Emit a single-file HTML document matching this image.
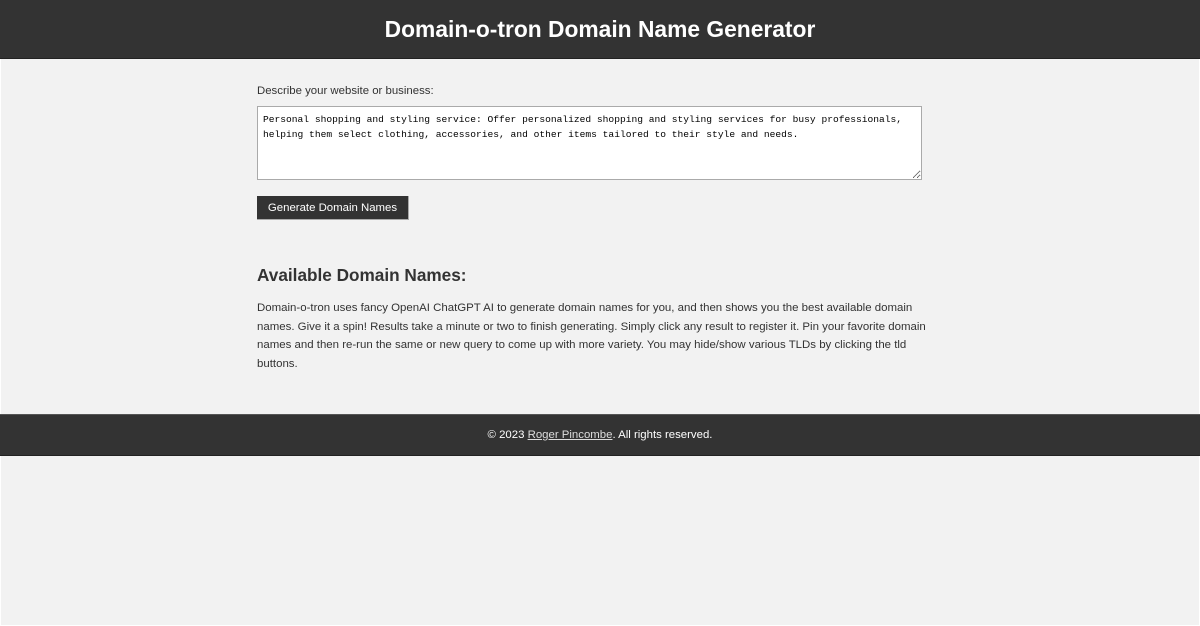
<!DOCTYPE html>
<html><head><style>
html,body{margin:0;padding:0;background:#fff;}
body{font-family:"Liberation Sans",Arial,sans-serif;width:1200px;height:626px;position:relative;overflow:hidden;}
.wrap{position:absolute;left:1px;top:0;width:1198px;height:625px;background:#f2f2f2;}
header{position:absolute;left:0;top:0;width:1200px;height:58px;background:#333;border-bottom:1px solid #222;color:#fff;text-align:center;font-size:22.8px;font-weight:bold;line-height:58px;}
.lbl{position:absolute;left:257px;top:85px;font-size:11.4px;color:#333;}
textarea{position:absolute;left:257px;top:106px;width:665px;height:74px;box-sizing:border-box;border:1px solid #aaa;background:#fff;font-family:"Liberation Mono",monospace;font-size:9.6px;line-height:15px;padding:5px 5px 5px;resize:vertical;margin:0;color:#000;white-space:pre;overflow:hidden;}
.btn{position:absolute;left:257px;top:196px;width:152px;height:24px;background:#333;color:#fff;font-size:11.4px;line-height:24px;text-align:center;border-right:1px solid #aaa;border-bottom:1px solid #aaa;box-sizing:border-box;}
h2{position:absolute;left:257px;top:265px;margin:0;font-size:17.2px;color:#333;}
p{position:absolute;left:257px;top:299px;width:680px;margin:0;font-size:11.45px;line-height:18.5px;color:#333;}
footer{position:absolute;left:0;top:414px;width:1200px;height:42px;background:#333;border-top:1px solid #555;border-bottom:1px solid #222;box-sizing:border-box;color:#fff;font-size:11.4px;text-align:center;line-height:40px;}
footer a{color:#ddd;text-decoration:underline;}
</style></head><body>
<div class="wrap"></div>
<header>Domain-o-tron Domain Name Generator</header>
<div class="lbl">Describe your website or business:</div>
<textarea>Personal shopping and styling service: Offer personalized shopping and styling services for busy professionals,
helping them select clothing, accessories, and other items tailored to their style and needs.</textarea>
<div class="btn">Generate Domain Names</div>
<h2>Available Domain Names:</h2>
<p>Domain-o-tron uses fancy OpenAI ChatGPT AI to generate domain names for you, and then shows you the best available domain names. Give it a spin! Results take a minute or two to finish generating. Simply click any result to register it. Pin your favorite domain names and then re-run the same or new query to come up with more variety. You may hide/show various TLDs by clicking the tld buttons.</p>
<footer>© 2023 <a>Roger Pincombe</a>. All rights reserved.</footer>
</body></html>
